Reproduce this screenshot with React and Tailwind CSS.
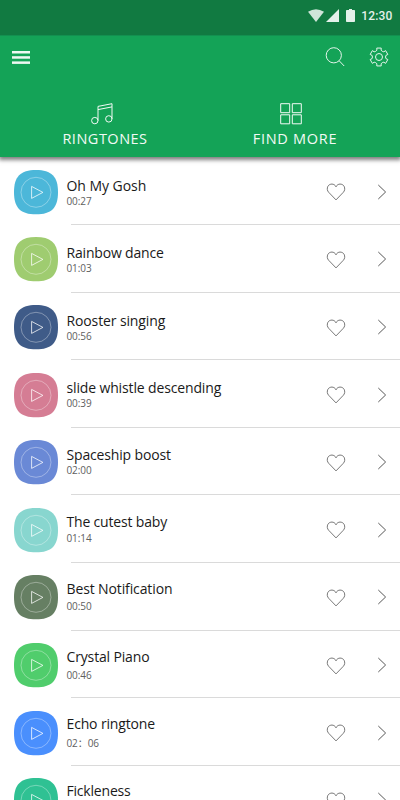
const RINGTONES = [
  { title: 'Oh My Gosh', time: '00:27', color: 'text-[#4cb7d9]', pad: 'pt-[19px]', gap: 'mt-0', track: 'tracking-[-0.05px]' },
  { title: 'Rainbow dance', time: '01:03', color: 'text-[#9fcc70]', pad: 'pt-[18px]', gap: 'mt-0', track: 'tracking-[-0.18px]' },
  { title: 'Rooster singing', time: '00:56', color: 'text-[#3f5b88]', pad: 'pt-[18px]', gap: 'mt-0', track: 'tracking-[-0.12px]' },
  { title: 'slide whistle descending', time: '00:39', color: 'text-[#d57d94]', pad: 'pt-[18px]', gap: 'mt-0', track: 'tracking-[-0.14px]' },
  { title: 'Spaceship boost', time: '02:00', color: 'text-[#6a89d6]', pad: 'pt-[17px]', gap: 'mt-0', track: 'tracking-[-0.16px]' },
  { title: 'The cutest baby', time: '01:14', color: 'text-[#88d6cf]', pad: 'pt-[17px]', gap: 'mt-px', track: 'tracking-[-0.18px]' },
  { title: 'Best Notification', time: '00:50', color: 'text-[#667f63]', pad: 'pt-[16px]', gap: 'mt-0.5', track: 'tracking-[-0.12px]' },
  { title: 'Crystal Piano', time: '00:46', color: 'text-[#50cd6c]', pad: 'pt-[16px]', gap: 'mt-[3px]', track: 'tracking-[-0.15px]' },
  { title: 'Echo ringtone', time: '02：06', color: 'text-[#4a8ffd]', pad: 'pt-[16px]', gap: 'mt-1', track: 'tracking-[-0.15px]' },
  { title: 'Fickleness', time: '', color: 'text-[#2fc193]', pad: 'pt-[15px]', gap: 'mt-1', track: 'tracking-[-0.2px]' },
];

const polar = (r, deg) => {
  const a = (deg * Math.PI) / 180;
  return `${(10 + r * Math.sin(a)).toFixed(2)} ${(10 - r * Math.cos(a)).toFixed(2)}`;
};

// six teeth, with a curved valley after each one
const GEAR = [0, 60, 120, 180, 240, 300]
  .map((d, i) => `${i ? 'L' : 'M'}${polar(7.1, d - 17)}L${polar(9.2, d - 14)}L${polar(9.2, d + 14)}L${polar(7.1, d + 17)}Q${polar(6.2, d + 30)} ${polar(7.1, d + 43)}`)
  .join('') + 'Z';

function StatusBar() {
  return (
    <div className="flex h-[35px] items-center justify-end bg-[#117a41] pr-[7.5px] text-[#e4f1ea]">
      <svg width="16" height="13" viewBox="0 0 16 13" className="-mt-1 opacity-90" fill="currentColor">
        <path d="M0 2.8Q8-2.4 16 2.8L8 13z" />
      </svg>
      <svg width="13" height="13" viewBox="0 0 13 13" className="-mt-1 ml-[2px]" fill="currentColor">
        <path d="M13 0v13H0z" />
      </svg>
      <svg width="9" height="13" viewBox="0 0 9 13" className="-mt-1 ml-[7px]" fill="currentColor">
        <path d="M3 0h3v.9h2.2q.8 0 .8.8v10.5q0 .8-.8.8H.8Q0 13 0 12.2V1.7q0-.8.8-.8H3z" />
      </svg>
      <span className="-mt-[3px] ml-[6px] font-[Roboto,sans-serif] text-[12px] font-medium leading-none tracking-[0.15px]">12:30</span>
    </div>
  );
}

function Toolbar() {
  return (
    <div className="flex h-[43px] items-center justify-between border-t border-[#139050] pl-3 pr-[11.5px]">
      <svg width="18" height="13" viewBox="0 0 18 13" fill="#eef8f2">
        <rect width="18" height="2.5" />
        <rect y="5.2" width="18" height="2.5" />
        <rect y="10.4" width="18" height="2.5" />
      </svg>
      <div className="flex items-center gap-[23.5px]">
        <svg width="20" height="20" viewBox="0 0 20 20" fill="none" stroke="#e6f5ec" strokeWidth="1">
          <circle cx="8.8" cy="8.3" r="7.6" />
          <path d="M14.2 13.8l5 5.2" />
        </svg>
        <svg width="20" height="20" viewBox="0 0 20 20" fill="none" stroke="#e6f5ec" strokeWidth="1" strokeLinejoin="round">
          <path d={GEAR} />
          <circle cx="10" cy="10" r="3.5" />
        </svg>
      </div>
    </div>
  );
}

function Tabs() {
  return (
    <div className="flex h-[79px] px-[10px] pt-[25px] text-[14.5px] leading-none text-[#f2faf5]">
      <button className="flex w-1/2 flex-col items-center">
        <svg width="22" height="22" viewBox="0 0 22 22" className="-ml-[7px]" fill="none" stroke="currentColor" strokeWidth="1">
          <circle cx="3.8" cy="17.6" r="3.2" />
          <circle cx="17.8" cy="15.9" r="3.2" />
          <path d="M7 17.6V3.4L21 .7v15.2M7 6.6l14-2.7" />
        </svg>
        <span className="mt-[7px] tracking-[0.5px]">RINGTONES</span>
      </button>
      <button className="flex w-1/2 flex-col items-center">
        <svg width="22" height="22" viewBox="0 0 22 22" className="-ml-2" fill="none" stroke="currentColor" strokeWidth="1">
          <path d="M.7.7h9v9h-9zM12.3.7h9v9h-9zM.7 11.8h9v9h-9zM12.3 11.8h9v9h-9z" />
        </svg>
        <span className="mt-[7px] tracking-[0.7px]">FIND MORE</span>
      </button>
    </div>
  );
}

function PlayTile({ color }) {
  return (
    <svg width="44" height="45" viewBox="0 0 44 45" className={`mt-[12.5px] shrink-0 ${color}`}>
      <path fill="currentColor" d="M22 .1C37.5.1 44 6.6 44 22.2S37.5 44.3 22 44.3 0 37.8 0 22.2 6.5.1 22 .1z" />
      <circle cx="22" cy="22.3" r="15" fill="none" stroke="#fff" strokeOpacity="0.5" strokeWidth="0.7" />
      <path d="M17.6 16.4v12l11.3-6z" fill="none" stroke="#fff" strokeOpacity="0.85" strokeWidth="0.9" />
    </svg>
  );
}

function RingtoneRow({ item }) {
  return (
    <li className="flex h-[67.6px] pl-[14px]">
      <PlayTile color={item.color} />
      <div className="relative flex flex-1 pl-[8.5px]">
        <div className={`flex-1 ${item.pad}`}>
          <p className={`text-[14px] leading-5 text-[#1a1a1a] ${item.track}`}>{item.title}</p>
          {item.time && (
            <p className={`text-[10px] leading-[10px] tracking-[-0.1px] text-[#606060] ${item.gap}`}>{item.time}</p>
          )}
        </div>
        <svg width="20" height="18" viewBox="0 0 20 18" className="mt-[26px]" fill="none" stroke="#555" strokeWidth="0.8">
          <path d="M10 3.8C8.4.2 3.6.3 1.9 3.3.8 5.4 1.2 7.8 2.7 9.3L10 16.9l7.3-7.6c1.5-1.5 1.9-3.9.8-6C16.4.3 11.6.2 10 3.8z" />
        </svg>
        <svg width="10" height="16" viewBox="0 0 10 16" className="ml-[30.5px] mr-[13.5px] mt-[26.5px]" fill="none" stroke="#444" strokeWidth="0.9">
          <path d="M1.3 1L8.6 8l-7.3 7" />
        </svg>
        <span className="absolute bottom-0 left-[13px] right-0 h-px bg-[#dadada]" />
      </div>
    </li>
  );
}

export default function App() {
  return (
    <div className="h-[800px] w-[400px] overflow-hidden bg-white font-['Open_Sans','Noto_Sans','Noto_Sans_CJK_SC',sans-serif]">
      <header className="relative h-[157px] bg-[#14a357] shadow-[0_2px_4px_1px_rgba(0,0,0,0.5)]">
        <StatusBar />
        <Toolbar />
        <Tabs />
      </header>
      <ul className="pt-[0.4px]">
        {RINGTONES.map((item) => (
          <RingtoneRow key={item.title} item={item} />
        ))}
      </ul>
    </div>
  );
}
